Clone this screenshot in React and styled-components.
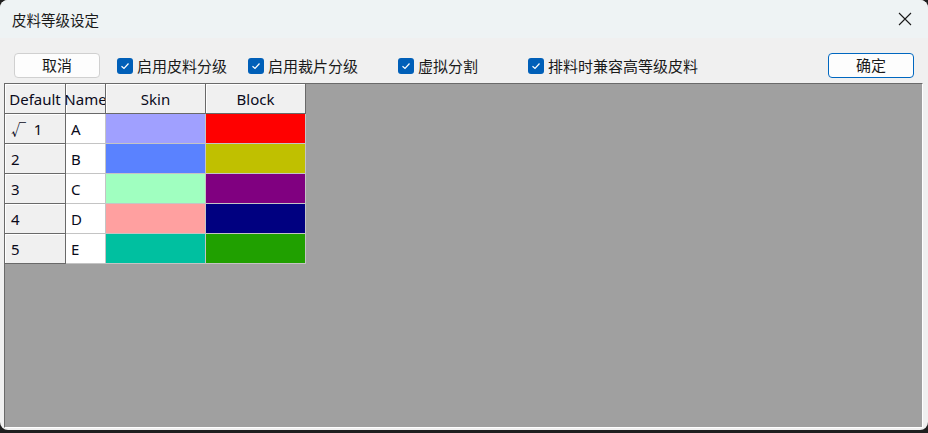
import React from 'react'
import styled, { createGlobalStyle } from 'styled-components'

const GlobalStyle = createGlobalStyle`
  html, body {
    margin: 0;
    padding: 0;
    background: #1f1f1f;
  }
  * { box-sizing: border-box; }
`

const Window = styled.div`
  width: 928px;
  height: 430px;
  display: flex;
  flex-direction: column;
  background: #f0f0f0;
  border-radius: 8px;
  overflow: hidden;
  font-family: "Noto Sans", "Noto Sans CJK SC", sans-serif;
  color: #000;
`

const TitleBar = styled.div`
  height: 38px;
  flex: 0 0 38px;
  display: flex;
  align-items: center;
  justify-content: space-between;
  padding: 0 16px 0 12px;
  background: #eef3f4;
  font-size: 14.5px;
  color: #1a1a1a;
`

const CloseButton = styled.div`
  width: 14px;
  height: 14px;
  display: flex;
  svg { display: block; }
`

const Toolbar = styled.div`
  height: 45px;
  flex: 0 0 45px;
  display: flex;
  align-items: flex-start;
  padding: 15px 0 0 14px;
  font-size: 15px;
`

const Button = styled.button`
  width: 86px;
  height: 25px;
  margin-left: ${p => p.$left || 0}px;
  background: #fdfdfd;
  border: 1px solid ${p => (p.$primary ? '#0067c0' : '#d0d0d0')};
  border-radius: 4px;
  font-family: inherit;
  font-size: 15px;
  color: #1a1a1a;
  padding: 0;
  line-height: 23px;
`

const Check = styled.label`
  display: flex;
  align-items: center;
  height: 25px;
  margin-left: ${p => p.$left}px;
  white-space: nowrap;
  color: #1a1a1a;
`

const Box = styled.span`
  width: 16px;
  height: 16px;
  border-radius: 3px;
  background: #005fb8;
  display: flex;
  align-items: center;
  justify-content: center;
  margin-right: 4px;
`

const Panel = styled.div`
  flex: 1;
  margin: 0 5px 2px 4px;
  background: #a0a0a0;
  border-top: 1px solid #6a6a6a;
  border-left: 1px solid #6a6a6a;
  border-right: 1px solid #ffffff;
  border-bottom: 1px solid #ffffff;
`

const Grid = styled.div`
  display: grid;
  grid-template-columns: 61px 40px 100px 100px;
  grid-auto-rows: 30px;
  width: max-content;
  font-size: 15px;
  color: #0a0a1a;
`

const HeadCell = styled.div`
  display: flex;
  align-items: center;
  justify-content: ${p => (p.$left ? 'flex-start' : 'center')};
  padding-left: ${p => (p.$left ? '6px' : '0')};
  background: #f0f0f0;
  border-right: 1px solid #696969;
  border-bottom: 1px solid #696969;
  box-shadow: inset 1px 1px 0 #ffffff;
  overflow: hidden;
  white-space: pre;
`

const Cell = styled.div`
  display: flex;
  align-items: center;
  padding-left: 5px;
  background: ${p => p.$color || '#ffffff'};
  border-right: 1px solid #c4c4c4;
  border-bottom: 1px solid #c4c4c4;
`

const rows = [
  { id: '1', name: 'A', skin: '#a0a0ff', block: '#ff0000', def: true },
  { id: '2', name: 'B', skin: '#5a82ff', block: '#c0c000' },
  { id: '3', name: 'C', skin: '#a0ffc0', block: '#800080' },
  { id: '4', name: 'D', skin: '#ffa0a0', block: '#000080' },
  { id: '5', name: 'E', skin: '#00c0a0', block: '#20a000' },
]

const options = [
  { label: '启用皮料分级', left: 17 },
  { label: '启用裁片分级', left: 21 },
  { label: '虚拟分割', left: 40 },
  { label: '排料时兼容高等级皮料', left: 50 },
]

const Tick = () => (
  <svg width="10" height="8" viewBox="0 0 10 8">
    <path d="M1.5 4.2 L4 6.5 L8.5 1.5" fill="none" stroke="#fff" strokeWidth="1.2" />
  </svg>
)

const App = () => (
  <>
    <GlobalStyle />
    <Window>
      <TitleBar>
        <span>皮料等级设定</span>
        <CloseButton>
          <svg width="14" height="14" viewBox="0 0 14 14">
            <path d="M1 1 L13 13 M13 1 L1 13" stroke="#1a1a1a" strokeWidth="1.1" />
          </svg>
        </CloseButton>
      </TitleBar>
      <Toolbar>
        <Button>取消</Button>
        {options.map(o => (
          <Check key={o.label} $left={o.left}>
            <Box><Tick /></Box>
            {o.label}
          </Check>
        ))}
        <Button $primary $left={130}>确定</Button>
      </Toolbar>
      <Panel>
        <Grid>
          <HeadCell>Default</HeadCell>
          <HeadCell>Name</HeadCell>
          <HeadCell>Skin</HeadCell>
          <HeadCell>Block</HeadCell>
          {rows.map(r => (
            <React.Fragment key={r.id}>
              <HeadCell $left>{r.def ? `√  ${r.id}` : r.id}</HeadCell>
              <Cell>{r.name}</Cell>
              <Cell $color={r.skin} />
              <Cell $color={r.block} />
            </React.Fragment>
          ))}
        </Grid>
      </Panel>
    </Window>
  </>
)

export default App
